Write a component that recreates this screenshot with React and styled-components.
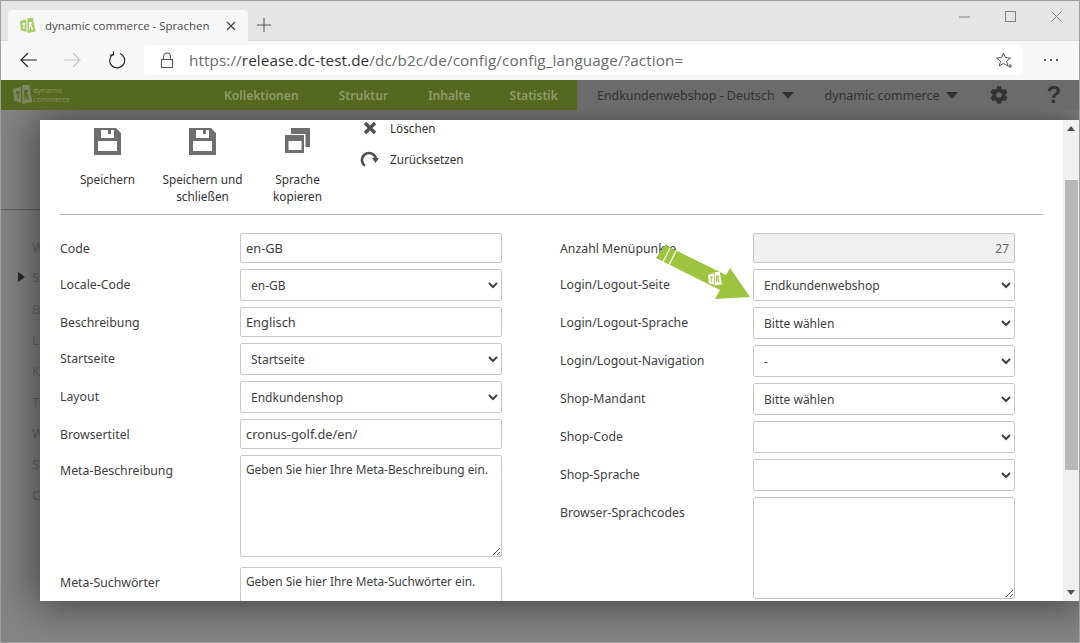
import React from "react";
import styled, { createGlobalStyle } from "styled-components";
import { FaCog } from "react-icons/fa";

const Global = createGlobalStyle`
  html, body { margin: 0; padding: 0; height: 100%; overflow: hidden; background: #fff; }
  * { box-sizing: border-box; }
`;

const FONT = `"Open Sans", "Noto Sans", sans-serif`;

const Window = styled.div`
  position: relative;
  width: 1080px;
  height: 643px;
  display: flex;
  flex-direction: column;
  overflow: hidden;
  border: 1px solid #a0a0a0;
  font-family: ${FONT};
`;
const TabStrip = styled.div`
  height: 40px;
  flex: none;
  background: #e5e5e5;
  display: flex;
  align-items: flex-end;
  padding-left: 7px;
  border-bottom: 1px solid #dcdcdc;
`;
const Tab = styled.div`
  width: 240px;
  height: 31px;
  background: #f7f7f7;
  border-radius: 4px 4px 0 0;
  display: flex;
  align-items: center;
  padding: 0 12px;
  gap: 9px;
  font-size: 11.45px;
  color: #4a4a4a;
  margin-bottom: -1px;
`;
const TabTitle = styled.span` flex: 1; white-space: nowrap; `;
const NewTab = styled.div`
  width: 30px;
  height: 31px;
  margin-left: 1px;
  display: flex;
  align-items: center;
  justify-content: center;
`;
const WindowButtons = styled.div`
  margin-left: auto;
  display: flex;
  align-self: flex-start;
`;
const WinBtn = styled.div`
  width: 46px;
  height: 30px;
  display: flex;
  align-items: center;
  justify-content: center;
`;
const Toolbar = styled.div`
  height: 39px;
  flex: none;
  background: #f7f7f7;
  display: flex;
  align-items: center;
  padding: 0 0 1px 16px;
`;
const NavIcon = styled.div`
  width: 24px;
  height: 24px;
  margin-right: ${(p) => p.$gap}px;
  display: flex;
  align-items: center;
  justify-content: center;
`;
const AddressBar = styled.div`
  width: 879px;
  height: 30px;
  background: #fff;
  border-radius: 4px;
  display: flex;
  align-items: center;
  padding: 0 10px 0 16px;
  font-size: 15.25px;
  color: #6a6a6a;
  letter-spacing: 0.1px;
`;
const Host = styled.span` color: #333; `;
const Url = styled.span` flex: 1; margin-left: 15px; white-space: nowrap; `;
const More = styled.div`
  flex: none;
  width: 56px;
  display: flex;
  justify-content: center;
`;
const AppHeader = styled.div`
  height: 30px;
  flex: none;
  display: flex;
`;
const GreenBar = styled.div`
  width: 576px;
  flex: none;
  background: #56671f;
  display: flex;
  align-items: center;
  padding-left: 12px;
`;
const LogoText = styled.div`
  font-size: 7.5px;
  line-height: 9px;
  color: #87935f;
  width: 191px;
`;
const NavItem = styled.div`
  font-size: 12.1px;
  font-weight: 600;
  color: #8f9a6d;
  margin-right: ${(p) => p.$gap}px;
  font-family: "Noto Sans", sans-serif;
`;
const GrayBar = styled.div`
  flex: 1;
  display: flex;
  align-items: center;
  padding-left: 20px;
  color: #333;
  font-size: 12.4px;
  background: #6b6b6b;
  font-family: "Noto Sans", sans-serif;
  white-space: nowrap;
`;
const Company = styled.span` font-size: 12.5px; `;
const Caret = styled.span`
  width: 0;
  height: 0;
  border-left: 6.5px solid transparent;
  border-right: 6.5px solid transparent;
  border-top: 7px solid #333;
  margin: 0 ${(p) => p.$after}px 0 7px;
`;
const Question = styled.span`
  font-size: 24px;
  font-weight: 700;
  color: #333;
  margin-left: 38px;
  font-family: "Liberation Sans", sans-serif;
`;
const Backdrop = styled.div`
  flex: 1;
  position: relative;
  background: #858585;
  overflow: hidden;
`;
const BackRow = styled.div`
  position: absolute;
  left: 31px;
  top: ${(p) => p.$top}px;
  font-size: 13px;
  color: #6a6a6a;
  font-family: "Noto Sans", sans-serif;
`;
const BackTriangle = styled.div`
  position: absolute;
  left: 17px;
  top: 162px;
  width: 0;
  height: 0;
  border-top: 5px solid transparent;
  border-bottom: 5px solid transparent;
  border-left: 7px solid #2a2a2a;
`;
const BackLine = styled.div`
  position: absolute;
  left: 0;
  top: 99px;
  width: 40px;
  height: 1px;
  background: #666;
`;
const Modal = styled.div`
  position: absolute;
  left: 39px;
  top: 10px;
  width: 1039px;
  height: 481px;
  background: #fff;
  display: flex;
  box-shadow: 0 0 40px 5px rgba(0, 0, 0, 0.5);
`;
const ModalBody = styled.div`
  flex: 1;
  padding: 0 20px;
  overflow: hidden;
  font-family: "Noto Sans", sans-serif;
  color: #404040;
`;
const Actions = styled.div`
  height: 95px;
  display: flex;
  border-bottom: 1px solid #b4b4b4;
`;
const ActionBtn = styled.div`
  width: ${(p) => p.$w}px;
  display: flex;
  flex-direction: column;
  align-items: center;
  text-align: center;
  font-size: 11.8px;
  line-height: 17px;
  color: #333;
  padding-top: 8px;
`;
const ActionIcon = styled.div`
  height: 27px;
  display: flex;
`;
const ActionLabel = styled.div` margin-top: 16px; `;
const SideActions = styled.div`
  display: flex;
  flex-direction: column;
  margin: -1px 0 0 15px;
  gap: 14px;
  font-size: 11.7px;
  color: #333;
`;
const SideAction = styled.div`
  display: flex;
  align-items: center;
  height: 17px;
  gap: 11px;
`;
const SideIcon = styled.div`
  width: 19px;
  display: flex;
  justify-content: center;
`;
const Form = styled.div`
  display: flex;
  padding-top: 18px;
`;
const Column = styled.div`
  width: ${(p) => p.$w}px;
  margin-right: ${(p) => p.$mr}px;
  flex: none;
  display: flex;
  flex-direction: column;
  gap: 6px;
`;
const Row = styled.div`
  display: flex;
  align-items: flex-start;
`;
const Label = styled.label`
  flex: none;
  width: ${(p) => p.$w}px;
  font-size: 12.3px;
  line-height: 17px;
  padding-top: 7px;
  color: #404040;
  white-space: nowrap;
`;
const Input = styled.input`
  flex: 1;
  min-width: 0;
  height: 30px;
  border: 1px solid #c8c8c8;
  border-radius: 2px;
  padding: 0 5px;
  font: 12.8px "Noto Sans", sans-serif;
  color: #404040;
  background: ${(p) => (p.disabled ? "#f0f0f0" : "#fff")};
  text-align: ${(p) => (p.disabled ? "right" : "left")};
  opacity: 1;
  &:disabled { color: #666; font-size: 12px; }
`;
const Select = styled.select`
  flex: 1;
  min-width: 0;
  height: 32px;
  border: 1px solid #c8c8c8;
  border-radius: 2px;
  padding: 0 6px;
  font: 12px "Noto Sans", sans-serif;
  color: #404040;
  background: #fff;
`;
const Area = styled.textarea`
  flex: 1;
  min-width: 0;
  height: 102px;
  border: 1px solid #c8c8c8;
  border-radius: 2px;
  padding: 5px;
  font: 11.85px/17px "Noto Sans", sans-serif;
  color: #404040;
  background: #fff;
  margin: 0;
  &::placeholder { color: #404040; opacity: 1; }
`;
const SpacedRow = styled(Row)` margin-top: 4px; `;
const Scrollbar = styled.div`
  width: 16px;
  flex: none;
  background: #f0f0f0;
  position: relative;
  display: flex;
  flex-direction: column;
  align-items: center;
  justify-content: space-between;
`;
const Thumb = styled.div`
  position: absolute;
  top: 60px;
  left: 2px;
  right: 1px;
  height: 290px;
  background: #b8b8b8;
`;
const ScrollArrow = styled.div`
  margin: 6px 0;
  width: 0;
  height: 0;
  border-left: 4px solid transparent;
  border-right: 4px solid transparent;
  ${(p) => (p.$up ? "border-bottom: 5px solid #505050;" : "border-top: 5px solid #505050;")}
`;
const ArrowOverlay = styled.svg`
  position: absolute;
  left: 654px;
  top: 243px;
`;

const Favicon = ({ size = 16, fill = "#a9cf6a", ink = "#fff" }) => (
  <svg width={size} height={size} viewBox="0 0 16 16">
    <path d="M0 3l6.500-1.500V14L1 12.500z" fill={fill} />
    <path d="M7.500 0H13l2.500 13.500-8 1.500z" fill={fill} />
    <path d="M2.500 5h3v1.500h-1V11h-1V6.500h-1zM9 4h3v1.500h-1l2 6h-1.500L10 7v4.500H9z" fill={ink} />
  </svg>
);
const Floppy = () => (
  <svg width="27" height="27" viewBox="0 0 27 27">
    <path
      fillRule="evenodd"
      fill="#6e6e6e"
      d="M0 0H22L27 5V27H0ZM4 13V23H23V13ZM7 2V10H20V2H17V6H14V2Z"
    />
  </svg>
);
const CopyIcon = () => (
  <svg width="25" height="25" viewBox="0 0 25 25">
    <path
      fillRule="evenodd"
      fill="#6e6e6e"
      d="M6 0H25V19H20.500V6H6ZM0 7H19V25H0ZM3.500 13V22H16.500V13Z"
    />
  </svg>
);
const Cross = () => (
  <svg width="14" height="14" viewBox="0 0 14 14">
    <path d="M2 2l10 10M12 2L2 12" stroke="#505050" strokeWidth="3.500" fill="none" />
  </svg>
);
const Redo = () => (
  <svg width="19" height="16" viewBox="0 0 19 16">
    <path d="M4.900 14.700A7 7 0 1 1 15.900 8" stroke="#505050" strokeWidth="2.600" fill="none" />
    <path d="M12 7h7l-3.500 5z" fill="#505050" />
  </svg>
);

const left = [
  ["Code", <Input key="i" defaultValue="en-GB" />],
  ["Locale-Code", <Select key="s"><option>en-GB</option></Select>],
  ["Beschreibung", <Input key="i" defaultValue="Englisch" />],
  ["Startseite", <Select key="s"><option>Startseite</option></Select>],
  ["Layout", <Select key="s"><option>Endkundenshop</option></Select>],
  ["Browsertitel", <Input key="i" defaultValue="cronus-golf.de/en/" />],
  ["Meta-Beschreibung", <Area key="a" placeholder="Geben Sie hier Ihre Meta-Beschreibung ein." />],
];
const right = [
  ["Anzahl Menüpunkte", <Input key="i" disabled defaultValue="27" />],
  ["Login/Logout-Seite", <Select key="s"><option>Endkundenwebshop</option></Select>],
  ["Login/Logout-Sprache", <Select key="s"><option>Bitte wählen</option></Select>],
  ["Login/Logout-Navigation", <Select key="s"><option>-</option></Select>],
  ["Shop-Mandant", <Select key="s"><option>Bitte wählen</option></Select>],
  ["Shop-Code", <Select key="s"><option></option></Select>],
  ["Shop-Sprache", <Select key="s"><option></option></Select>],
  ["Browser-Sprachcodes", <Area key="a" />],
];
const backLabels = [["W", 128], ["S", 158], ["B", 190], ["L", 221], ["K", 252], ["T", 283], ["W", 314], ["S", 345], ["C", 376]];

export default function App() {
  return (
    <>
      <Global />
      <Window>
        <TabStrip>
          <Tab>
            <Favicon />
            <TabTitle>dynamic commerce - Sprachen</TabTitle>
            <svg width="10" height="10" viewBox="0 0 10 10">
              <path d="M1 1l8 8M9 1l-8 8" stroke="#444" strokeWidth="1.200" />
            </svg>
          </Tab>
          <NewTab>
            <svg width="14" height="14" viewBox="0 0 14 14">
              <path d="M7 0v14M0 7h14" stroke="#555" strokeWidth="1" />
            </svg>
          </NewTab>
          <WindowButtons>
            <WinBtn>
              <svg width="11" height="11" viewBox="0 0 11 11"><path d="M0 6h11" stroke="#808080" /></svg>
            </WinBtn>
            <WinBtn>
              <svg width="11" height="11" viewBox="0 0 11 11"><rect x=".5" y=".5" width="10" height="10" fill="none" stroke="#808080" /></svg>
            </WinBtn>
            <WinBtn>
              <svg width="11" height="11" viewBox="0 0 11 11"><path d="M.5.5l10 10M10.500.5l-10 10" stroke="#808080" /></svg>
            </WinBtn>
          </WindowButtons>
        </TabStrip>
        <Toolbar>
          <NavIcon $gap={19}>
            <svg width="18" height="16" viewBox="0 0 18 16"><path d="M17 8H1M8 1L1 8l7 7" fill="none" stroke="#222" strokeWidth="1.200" /></svg>
          </NavIcon>
          <NavIcon $gap={21}>
            <svg width="18" height="16" viewBox="0 0 18 16"><path d="M1 8h16M10 1l7 7-7 7" fill="none" stroke="#c4c4c4" strokeWidth="1.200" /></svg>
          </NavIcon>
          <NavIcon $gap={15}>
            <svg width="18" height="18" viewBox="0 0 18 18"><path d="M5 3.200A7.500 7.500 0 1 0 12 2.500M5.500 .5V4H1.800" fill="none" stroke="#222" strokeWidth="1.200" /></svg>
          </NavIcon>
          <AddressBar>
            <svg width="14" height="17" viewBox="0 0 14 17">
              <path d="M3.500 7V4.500a3.500 3.500 0 0 1 7 0V7M1.500 7.500h11v8h-11z" fill="none" stroke="#555" strokeWidth="1.100" />
            </svg>
            <Url>https://<Host>release.dc-test.de</Host>/dc/b2c/de/config/config_language/?action=</Url>
            <svg width="17" height="17" viewBox="0 0 17 17">
              <path d="M7.500 1l1.900 4.600 5 .4-3.800 3.200 1.200 4.800-4.300-2.600-4.200 2.600 1.200-4.800L.6 6l5-.4z" fill="none" stroke="#555" />
              <path d="M14 12v4M12 14h4" stroke="#555" />
            </svg>
          </AddressBar>
          <More>
            <svg width="16" height="4" viewBox="0 0 16 4"><circle cx="2" cy="2" r="1" fill="#222" /><circle cx="8" cy="2" r="1" fill="#222" /><circle cx="14" cy="2" r="1" fill="#222" /></svg>
          </More>
        </Toolbar>
        <AppHeader>
          <GreenBar>
            <Favicon size={20} fill="#7c8660" ink="#56671f" />
            <LogoText>dynamic<br />commerce</LogoText>
            <NavItem $gap={40}>Kollektionen</NavItem>
            <NavItem $gap={40}>Struktur</NavItem>
            <NavItem $gap={39}>Inhalte</NavItem>
            <NavItem $gap={0}>Statistik</NavItem>
          </GreenBar>
          <GrayBar>
            Endkundenwebshop - Deutsch
            <Caret $after={31} />
            <Company>dynamic commerce</Company>
            <Caret $after={32} />
            <FaCog size={18} color="#333" />
            <Question>?</Question>
          </GrayBar>
        </AppHeader>
        <Backdrop>
          <BackLine />
          <BackTriangle />
          {backLabels.map(([t, y], i) => <BackRow key={i} $top={y}>{t}</BackRow>)}
          <Modal>
            <ModalBody>
              <Actions>
                <ActionBtn $w={95}>
                  <ActionIcon><Floppy /></ActionIcon>
                  <ActionLabel>Speichern</ActionLabel>
                </ActionBtn>
                <ActionBtn $w={95}>
                  <ActionIcon><Floppy /></ActionIcon>
                  <ActionLabel>Speichern und<br />schließen</ActionLabel>
                </ActionBtn>
                <ActionBtn $w={95}>
                  <ActionIcon><CopyIcon /></ActionIcon>
                  <ActionLabel>Sprache<br />kopieren</ActionLabel>
                </ActionBtn>
                <SideActions>
                  <SideAction><SideIcon><Cross /></SideIcon>Löschen</SideAction>
                  <SideAction><SideIcon><Redo /></SideIcon>Zurücksetzen</SideAction>
                </SideActions>
              </Actions>
              <Form>
                <Column $w={442} $mr={58}>
                  {left.map(([l, c]) => <Row key={l}><Label $w={180}>{l}</Label>{c}</Row>)}
                  <SpacedRow>
                    <Label $w={180}>Meta-Suchwörter</Label>
                    <Area placeholder="Geben Sie hier Ihre Meta-Suchwörter ein." />
                  </SpacedRow>
                </Column>
                <Column $w={455} $mr={0}>
                  {right.map(([l, c]) => <Row key={l}><Label $w={193}>{l}</Label>{c}</Row>)}
                </Column>
              </Form>
            </ModalBody>
            <Scrollbar>
              <ScrollArrow $up />
              <Thumb />
              <ScrollArrow />
            </Scrollbar>
          </Modal>
        </Backdrop>
        <ArrowOverlay width="100" height="60" viewBox="0 0 100 60">
          <path d="M10 1L1 14 65 46 60 55 95 53 75 24 71 31Z" fill="#9cc43c" />
          <path d="M15 4L8 18M21 7L14 21" stroke="#fff" strokeWidth="1.300" />
          <g transform="translate(53 28) scale(.9)">
            <path d="M0 3l6.500-1.500V14L1 12.500z" fill="#fff" />
            <path d="M7.500 0H13l2.500 13.500-8 1.500z" fill="#fff" />
            <path d="M2.500 5h3v1.500h-1V11h-1V6.500h-1zM9 4h3v1.500h-1l2 6h-1.500L10 7v4.500H9z" fill="#9cc43c" />
          </g>
        </ArrowOverlay>
      </Window>
    </>
  );
}
